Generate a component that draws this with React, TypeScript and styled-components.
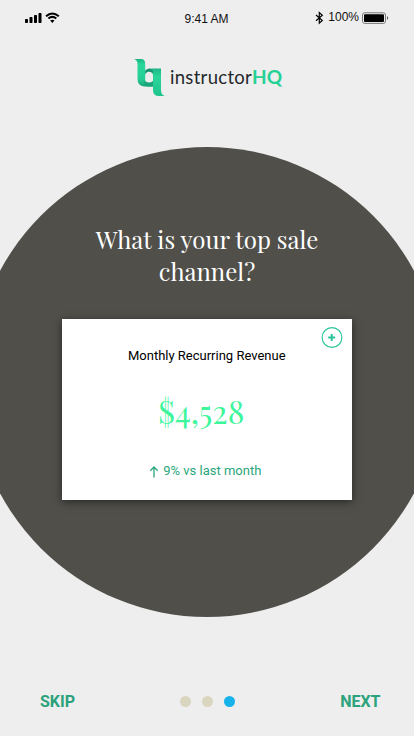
import React from 'react';
import styled, { createGlobalStyle } from 'styled-components';

const Global = createGlobalStyle`
  * { box-sizing: border-box; }
  html, body { margin: 0; background: #eeeeee; }
  body { overflow: hidden; }
`;

const Screen = styled.main`
  width: 414px;
  height: 736px;
  display: flex;
  flex-direction: column;
  overflow: hidden;
  background: #eeeeee;
  font-family: Roboto, "Liberation Sans", sans-serif;
`;

const StatusBar = styled.header`
  height: 36px;
  display: grid;
  grid-template-columns: 1fr 1fr 1fr;
  flex: none;
  padding: 0 25px;
  color: #111;
  font: 12px/36px "Liberation Sans", sans-serif;
`;

const StatusGroup = styled.div<{ $justify: string }>`
  display: flex;
  justify-content: ${p => p.$justify};
  height: 36px;
  white-space: nowrap;
`;

const Clock = styled.time`
  padding-top: 1px;
  margin-right: 1px;
`;

const Battery = styled.div`
  display: flex;
  gap: 3px;
  line-height: 34px;
  svg { flex: none; }
`;

const Brand = styled.div`
  height: 111px;
  flex: none;
  display: flex;
  padding: 22px 0 0 134px;
`;

const BrandName = styled.span`
  display: flex;
  margin: 6px 0 0 4px;
  font: 400 18.5px/26px Lato, sans-serif;
  letter-spacing: 0.3px;
  color: #24282b;
  white-space: nowrap;
  b { color: #25d195; font-size: 19px; font-weight: 700; letter-spacing: 0; }
`;

const Circle = styled.section`
  flex: none;
  width: 470px;
  height: 470px;
  margin-left: -28px;
  padding-top: 76px;
  display: flex;
  flex-direction: column;
  align-items: center;
  border-radius: 50%;
  background: #504f4a;
`;

const Question = styled.h1`
  width: 240px;
  margin: 0;
  color: #fff;
  text-align: center;
  font: 400 24px/32px "Playfair Display", "Liberation Serif", serif;
`;

const Card = styled.article`
  width: 290.5px;
  height: 181px;
  margin: 32px 0.5px 0 0;
  padding-top: 28px;
  display: flex;
  flex-direction: column;
  align-items: center;
  position: relative;
  background: #fff;
  box-shadow: 0 2px 8px rgba(0, 0, 0, 0.5);
`;

const AddButton = styled.button`
  position: absolute;
  top: 8px;
  right: 9px;
  padding: 0;
  border: 0;
  background: none;
  display: flex;
`;

const CardTitle = styled.h2`
  margin: 0;
  color: #000;
  font-size: 13px;
  line-height: 18px;
  font-weight: 400;
`;

const Amount = styled.div`
  height: 40px;
  margin: 26px 11px 0 0;
  color: #3df59a;
  font: 400 32px/40px "Playfair Display", "Liberation Serif", serif;
`;

const Change = styled.div`
  display: flex;
  gap: 4px;
  margin-top: 31px;
  margin-right: 3px;
  color: #2aa67b;
  font-size: 13px;
  line-height: 18px;
`;

const Footer = styled.footer`
  height: 119px;
  flex: none;
  display: grid;
  grid-template-columns: 1fr auto 1fr;
  align-items: center;
  padding: 50px 33.5px 0 40px;
`;

const NavButton = styled.button<{ $align: string }>`
  justify-self: ${p => p.$align};
  padding: 0;
  border: 0;
  background: none;
  color: #2ba27b;
  font: 700 16px/20px Roboto, sans-serif;
`;

const Dots = styled.div`
  display: flex;
  gap: 11px;
  margin-right: 6.5px;
`;

const Dot = styled.i<{ $active?: boolean }>`
  width: 11px;
  height: 11px;
  border-radius: 50%;
  background: ${p => (p.$active ? '#18b2ea' : '#d9d5be')};
`;

export default function App() {
  return (
    <Screen>
      <Global />
      <StatusBar>
        <StatusGroup $justify="flex-start">
          <svg width="36" height="36" aria-label="Signal and Wi-Fi">
            <rect x="0" y="19" width="3" height="4" rx=".7" />
            <rect x="4.5" y="17" width="3" height="6" rx=".7" />
            <rect x="9" y="15" width="3" height="8" rx=".7" />
            <rect x="13.5" y="13" width="3" height="10" rx=".7" />
            <path d="M21 16.3Q27.3 10.7 33.8 16.3M23.4 18.6Q27.3 15.2 31.3 18.6" fill="none" stroke="#000" strokeWidth="2" />
            <path d="M25.2 20.6Q27.3 19 29.5 20.6L27.3 23Z" />
          </svg>
        </StatusGroup>
        <StatusGroup $justify="center"><Clock>9:41 AM</Clock></StatusGroup>
        <StatusGroup $justify="flex-end">
          <Battery>
            <svg width="11" height="36" aria-label="Bluetooth">
              <path d="M2 15L8.3 20.5L5.3 23.2V12.5L8.3 15.2L2 20.7" fill="none" stroke="#000" strokeWidth="1.2" />
            </svg>
            <span>100%</span>
            <svg width="27" height="36" aria-label="Battery">
              <rect x=".5" y="12.8" width="23" height="10.6" rx="2.2" fill="none" stroke="#777" />
              <rect x="2" y="14.2" width="20" height="7.8" rx="1" />
              <path d="M25 16Q27.4 18 25 20Z" fill="#555" />
            </svg>
          </Battery>
        </StatusGroup>
      </StatusBar>

      <Brand>
        <svg width="32" height="40" viewBox="0 0 32 40" aria-label="instructorHQ logo">
          <defs>
            <linearGradient id="stem" x1="0" y1="0" x2="0" y2="1">
              <stop stopColor="#18b581" />
              <stop offset=".2" stopColor="#2ad69a" />
              <stop offset=".7" stopColor="#27cf96" />
              <stop offset="1" stopColor="#19a879" />
            </linearGradient>
            <linearGradient id="bowl" x1="0" y1="0" x2="0" y2="1">
              <stop stopColor="#20b486" />
              <stop offset=".3" stopColor="#2ad69a" />
              <stop offset="1" stopColor="#1fc38d" />
            </linearGradient>
          </defs>
          <path d="M0 1H7Q11.2 1 11.2 6V22Q11.5 25 15 25L19 28.5H10Q3.5 28 3.5 21V6Q3.5 2 0 1Z" fill="url(#stem)" />
          <path d="M11.2 15Q12 10.5 18 10.5H27V32Q27 37 31 38H25Q19 38 19 32V18Q19 13.5 15.5 13.5Q12 13.5 11.2 17Z" fill="url(#bowl)" />
          <path d="M11.2 16V12.5Q13 10.5 16 10.5L19 13V15.5Q14 11.5 11.2 16Z" fill="#18946e" />
          <path d="M11 23Q15 26 19 23V28.5H13Q9 28 11 23Z" fill="#19a67a" />
        </svg>
        <BrandName>instructor<b>HQ</b></BrandName>
      </Brand>

      <Circle>
        <Question>What is your top sale channel?</Question>
        <Card>
          <AddButton aria-label="Add">
            <svg width="22" height="22" fill="none" stroke="#2bc49a">
              <circle cx="11" cy="10.5" r="9.9" strokeWidth="1.1" />
              <path d="M7.2 10.5H14.2M10.7 7V14" strokeWidth="2" />
            </svg>
          </AddButton>
          <CardTitle>Monthly Recurring Revenue</CardTitle>
          <Amount>$4,528</Amount>
          <Change>
            <svg width="10" height="18" fill="none" stroke="currentColor" strokeWidth="1.3">
              <path d="M5 15.5V5M1.3 8.8L5 5L8.7 8.8" />
            </svg>
            <span>9% vs last month</span>
          </Change>
        </Card>
      </Circle>

      <Footer>
        <NavButton $align="start">SKIP</NavButton>
        <Dots><Dot /><Dot /><Dot $active /></Dots>
        <NavButton $align="end">NEXT</NavButton>
      </Footer>
    </Screen>
  );
}
